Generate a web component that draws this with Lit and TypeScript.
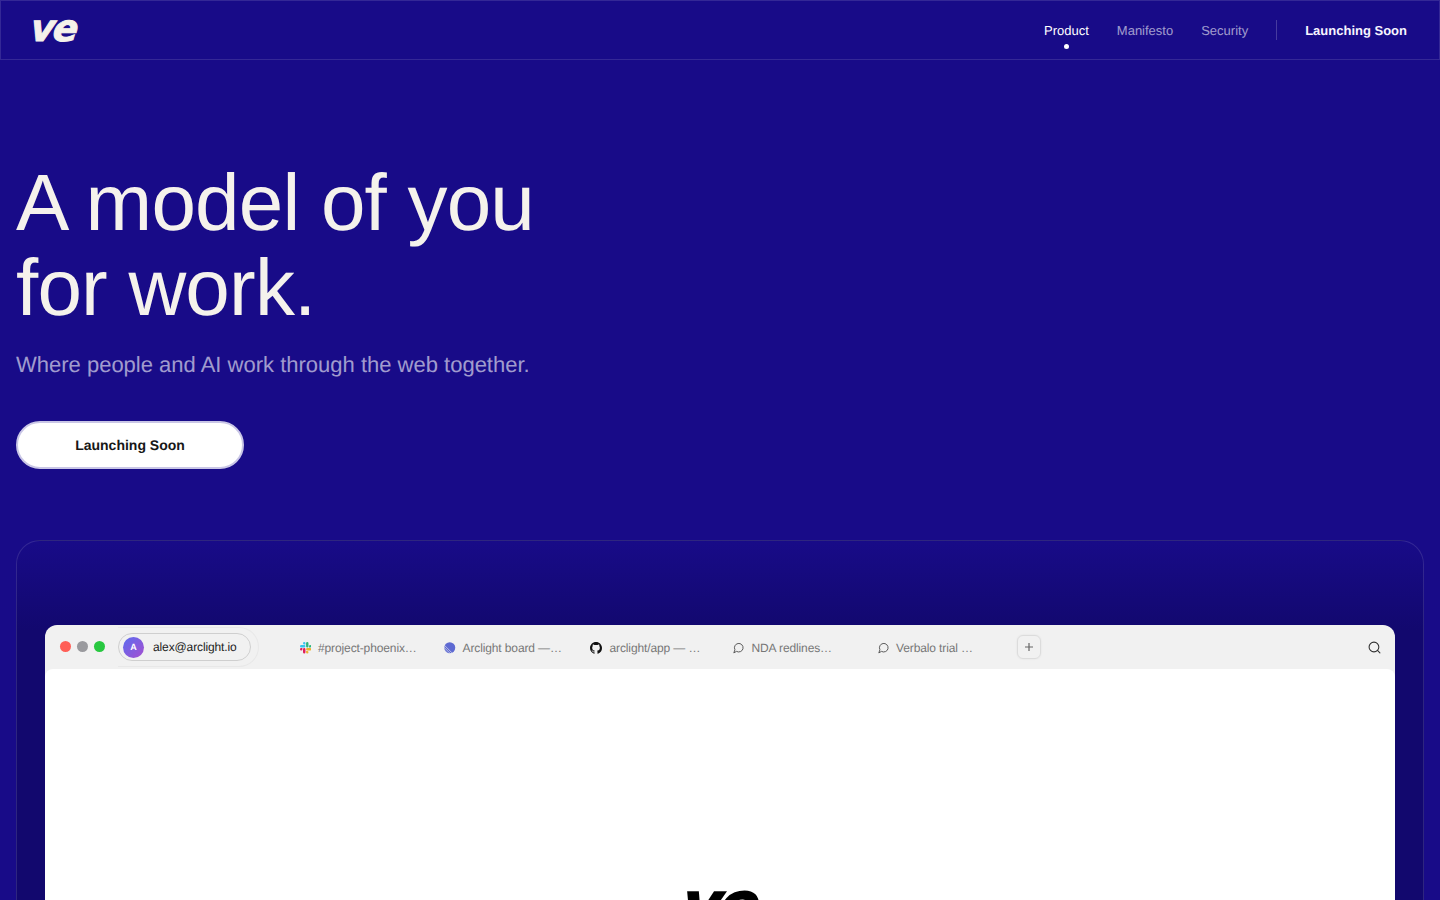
import { LitElement, html, css } from "lit";
import { customElement } from "lit/decorators.js";

const bubble = html`<svg class="ic" viewBox="0 0 24 24" fill="none" stroke="#555" stroke-width="2" stroke-linecap="round" stroke-linejoin="round"><path d="M7.9 20A9 9 0 1 0 4 16.1L2 22Z"/></svg>`;
const slack = html`<svg class="ic" viewBox="0 0 24 24">
<path fill="#E01E5A" d="M5.042 15.165a2.528 2.528 0 0 1-2.52 2.523A2.528 2.528 0 0 1 0 15.165a2.527 2.527 0 0 1 2.522-2.52h2.52v2.52zM6.313 15.165a2.527 2.527 0 0 1 2.521-2.52 2.527 2.527 0 0 1 2.521 2.52v6.313A2.528 2.528 0 0 1 8.834 24a2.528 2.528 0 0 1-2.521-2.522v-6.313z"/>
<path fill="#36C5F0" d="M8.834 5.042a2.528 2.528 0 0 1-2.521-2.52A2.528 2.528 0 0 1 8.834 0a2.528 2.528 0 0 1 2.521 2.522v2.52H8.834zM8.834 6.313a2.528 2.528 0 0 1 2.521 2.521 2.528 2.528 0 0 1-2.521 2.521H2.522A2.528 2.528 0 0 1 0 8.834a2.528 2.528 0 0 1 2.522-2.521h6.312z"/>
<path fill="#2EB67D" d="M18.956 8.834a2.528 2.528 0 0 1 2.522-2.521A2.528 2.528 0 0 1 24 8.834a2.528 2.528 0 0 1-2.522 2.521h-2.522V8.834zM17.688 8.834a2.528 2.528 0 0 1-2.523 2.521 2.527 2.527 0 0 1-2.52-2.521V2.522A2.527 2.527 0 0 1 15.165 0a2.528 2.528 0 0 1 2.523 2.522v6.312z"/>
<path fill="#ECB22E" d="M15.165 18.956a2.528 2.528 0 0 1 2.523 2.522A2.528 2.528 0 0 1 15.165 24a2.527 2.527 0 0 1-2.52-2.522v-2.522h2.52zM15.165 17.688a2.527 2.527 0 0 1-2.52-2.523 2.526 2.526 0 0 1 2.52-2.52h6.313A2.527 2.527 0 0 1 24 15.165a2.528 2.528 0 0 1-2.522 2.523h-6.313z"/></svg>`;
const linear = html`<svg class="ic" viewBox="0 0 24 24"><circle cx="12" cy="12" r="11.5" fill="#5E6AD2"/><g stroke="#f1f1f1" stroke-width="1.3"><path d="M-1 10 14 25M-1 15 9 25M-1 5 19 25"/></g></svg>`;
const github = html`<svg class="ic gh" viewBox="0 0 16 16"><path fill="#111" d="M8 0C3.58 0 0 3.58 0 8c0 3.54 2.29 6.53 5.47 7.59.4.07.55-.17.55-.38 0-.19-.01-.82-.01-1.49-2.01.37-2.53-.49-2.69-.94-.09-.23-.48-.94-.82-1.13-.28-.15-.68-.52-.01-.53.63-.01 1.08.58 1.23.82.72 1.21 1.87.87 2.33.66.07-.52.28-.87.51-1.07-1.78-.2-3.64-.89-3.64-3.95 0-.87.31-1.59.82-2.15-.08-.2-.36-1.02.08-2.12 0 0 .67-.21 2.2.82.64-.18 1.32-.27 2-.27.68 0 1.36.09 2 .27 1.53-1.04 2.2-.82 2.2-.82.44 1.1.16 1.92.08 2.12.51.56.82 1.27.82 2.15 0 3.07-1.87 3.75-3.65 3.95.29.25.54.73.54 1.48 0 1.07-.01 1.93-.01 2.2 0 .21.15.46.55.38A8.013 8.013 0 0016 8c0-4.42-3.58-8-8-8z"/></svg>`;

const tabs = [
  { icon: slack, label: "#project-phoenix…" },
  { icon: linear, label: "Arclight board —…" },
  { icon: github, label: "arclight/app — …" },
  { icon: bubble, label: "NDA redlines…" },
  { icon: bubble, label: "Verbalo trial …" },
];

@customElement("app-root")
export class AppRoot extends LitElement {
  static styles = css`
    :host {
      display: block;
      height: 900px;
      overflow: hidden;
      background: #180b88;
      font-family: "Liberation Sans", Arial, sans-serif;
      color: #fff;
      text-rendering: geometricPrecision;
    }
    .nav {
      height: 60px;
      box-sizing: border-box;
      border: 1px solid rgba(255, 255, 255, 0.12);
      display: flex;
      align-items: center;
      justify-content: space-between;
      padding: 0 32px 0 30px;
    }
    .logo {
      font-family: "DejaVu Sans", sans-serif;
      font-weight: 700;
      font-style: italic;
      letter-spacing: -0.05em;
      color: #f4f1ea;
      -webkit-text-stroke: 1px currentColor;
      line-height: 1;
      transform: skewX(-6deg);
    }
    .nav .logo { font-size: 37px; margin-top: -4px; }
    .links { display: flex; align-items: center; gap: 28px; font-size: 13px; }
    .link { color: rgba(255, 255, 255, 0.6); position: relative; }
    .link.on { color: #fff; }
    .link.on::after {
      content: "";
      position: absolute;
      left: 50%;
      bottom: -11px;
      width: 5px;
      height: 5px;
      margin-left: -2.5px;
      border-radius: 50%;
      background: #fff;
    }
    .sep { width: 1px; height: 20px; background: rgba(255, 255, 255, 0.2); }
    .soon { font-weight: 700; color: #f7f5ff; }
    .hero { padding: 100px 16px 0; }
    h1 {
      margin: 0;
      font-size: 80px;
      line-height: 85px;
      font-weight: 400;
      letter-spacing: -0.01em;
      color: #f5f2ec;
    }
    .sub {
      margin: 20px 0 0;
      font-size: 22px;
      line-height: 30px;
      color: rgba(255, 255, 255, 0.6);
    }
    .cta {
      margin-top: 41px;
      width: 228px;
      height: 48px;
      box-sizing: border-box;
      border-radius: 24px;
      border: 2px solid #c9c6e6;
      background: #fff;
      color: #171717;
      font-size: 14px;
      font-weight: 700;
      display: flex;
      align-items: center;
      justify-content: center;
    }
    .stage {
      margin: 71px 16px 0;
      height: 420px;
      box-sizing: border-box;
      border: 1px solid rgba(255, 255, 255, 0.12);
      border-radius: 24px;
      padding: 84px 28px 0;
      background: linear-gradient(180deg, #180b88 0px, #12086e 90px, #12086e 100%);
    }
    .win { border-radius: 12px 12px 0 0; background: #f1f1f1; overflow: hidden; }
    .bar {
      height: 44px;
      display: flex;
      align-items: center;
      padding: 0 14px 0 15px;
    }
    .lights { display: flex; gap: 6px; margin-top: -1px; }
    .lights i { width: 11px; height: 11px; border-radius: 50%; display: block; }
    .who {
      margin-left: 13px;
      height: 40px;
      box-sizing: border-box;
      display: flex;
      align-items: center;
      padding-right: 7px;
      border: 1px solid #e8e8e8;
      border-left: 0;
      border-radius: 0 20px 20px 0;
    }
    .pill {
      box-sizing: border-box;
      width: 133px;
      height: 28px;
      border-radius: 14px;
      border: 1px solid #cfcfcf;
      display: flex;
      align-items: center;
      padding-left: 4px;
      gap: 9px;
      font-size: 12px;
      letter-spacing: -0.01em;
      color: #222;
    }
    .ava {
      width: 21px;
      height: 21px;
      border-radius: 50%;
      background: linear-gradient(135deg, #5b6cf0, #a64fd0);
      color: #fff;
      font-size: 9px;
      font-weight: 700;
      display: flex;
      align-items: center;
      justify-content: center;
    }
    .tabs { display: flex; margin-left: 40.5px; margin-top: 2px; }
    .tab {
      width: 144.5px;
      display: flex;
      align-items: center;
      gap: 7px;
      font-size: 12px;
      letter-spacing: -0.01em;
      color: #777;
      white-space: nowrap;
    }
    .ic { width: 11.5px; height: 11.5px; flex: none; }
    .ic.gh { width: 12px; height: 12px; margin: 0 1px; }
    .plus {
      margin-left: -5px;
      width: 24px;
      height: 24px;
      box-sizing: border-box;
      border-radius: 6px;
      border: 1px solid #dcdcdc;
      box-shadow: 0 0 2px rgba(0, 0, 0, 0.08);
      display: flex;
      align-items: center;
      justify-content: center;
    }
    .plus svg { width: 10px; height: 10px; }
    .search { margin-left: auto; width: 13px; height: 13px; }
    .body {
      background: #fff;
      border-radius: 8px 8px 0 0;
      height: 400px;
      display: flex;
      justify-content: center;
      padding-top: 206px;
      box-sizing: border-box;
    }
    .body .logo { color: #000; font-size: 60px; -webkit-text-stroke: 2px currentColor; margin-left: -14px; }
  `;

  render() {
    return html`
      <header class="nav">
        <div class="logo">ve</div>
        <nav class="links">
          <span class="link on">Product</span>
          <span class="link">Manifesto</span>
          <span class="link">Security</span>
          <span class="sep"></span>
          <span class="soon">Launching Soon</span>
        </nav>
      </header>
      <section class="hero">
        <h1>A model of you<br />for work.</h1>
        <p class="sub">Where people and AI work through the web together.</p>
        <div class="cta">Launching Soon</div>
      </section>
      <section class="stage">
        <div class="win">
          <div class="bar">
            <div class="lights">
              <i style="background:#ff5f57"></i>
              <i style="background:#9a9a9e"></i>
              <i style="background:#28c840"></i>
            </div>
            <div class="who">
              <div class="pill"><span class="ava">A</span>alex@arclight.io</div>
            </div>
            <div class="tabs">
              ${tabs.map((t) => html`<div class="tab">${t.icon}<span>${t.label}</span></div>`)}
            </div>
            <div class="plus">
              <svg viewBox="0 0 10 10" fill="none" stroke="#666" stroke-width="1.2"><path d="M5 1v8M1 5h8"/></svg>
            </div>
            <svg class="search" viewBox="0 0 24 24" fill="none" stroke="#333" stroke-width="2" stroke-linecap="round"><circle cx="11" cy="11" r="9"/><path d="m22 22-4.5-4.5"/></svg>
          </div>
          <div class="body"><div class="logo">ve</div></div>
        </div>
      </section>
    `;
  }
}
